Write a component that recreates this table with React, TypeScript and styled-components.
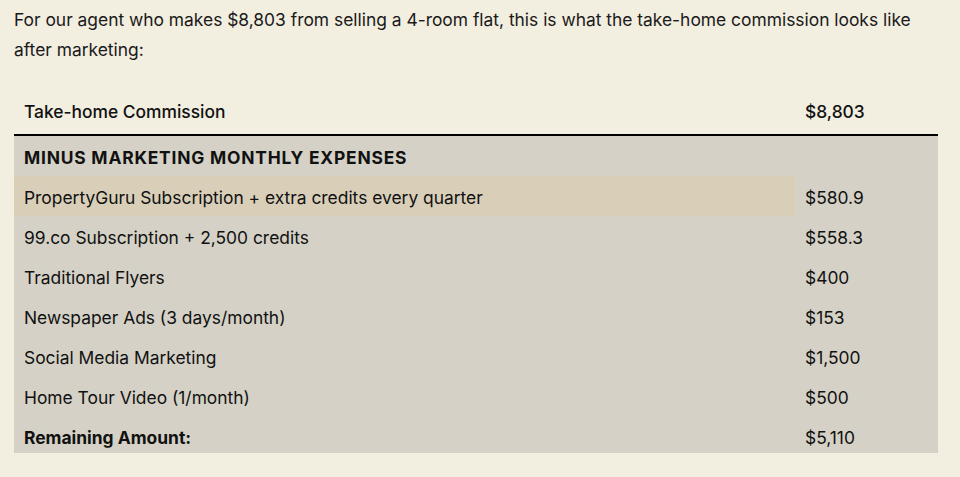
import React from 'react';
import styled, { createGlobalStyle } from 'styled-components';

const GlobalStyle = createGlobalStyle`
  html, body {
    margin: 0;
    padding: 0;
    background: #f2eee0;
  }
  body {
    font-family: Inter, "Noto Sans", sans-serif;
    color: #111;
  }
`;

const Page = styled.div`
  padding: 5px 22px 0 14px;
`;

const Intro = styled.p`
  margin: 0 0 26px;
  font-size: 17.4px;
  line-height: 30px;
  color: #1a1a1a;
`;

const Table = styled.table`
  width: 924px;
  border-collapse: collapse;
  font-size: 17.4px;
  line-height: 20px;
`;

const HeadCell = styled.th`
  text-align: left;
  font-weight: 500;
  padding: 11px 10px 12px;
  border-bottom: 2px solid #000;
`;

const Body = styled.tbody`
  background: #d5d1c6;
`;

const Cell = styled.td<{ $bold?: boolean; $caps?: boolean; $highlight?: boolean; $last?: boolean }>`
  padding: ${(p) => (p.$last ? '12px 10px 5px' : '12px 10px 8px')};
  font-weight: ${(p) => (p.$bold ? 700 : 400)};
  letter-spacing: ${(p) => (p.$caps ? '0.8px' : '0')};
  background: ${(p) => (p.$highlight ? '#d9cfb9' : 'transparent')};
  &:first-child {
    width: 761px;
  }
`;

const rows = [
  { label: 'PropertyGuru Subscription + extra credits every quarter', value: '$580.9', highlight: true },
  { label: '99.co Subscription + 2,500 credits', value: '$558.3' },
  { label: 'Traditional Flyers', value: '$400' },
  { label: 'Newspaper Ads (3 days/month)', value: '$153' },
  { label: 'Social Media Marketing', value: '$1,500' },
  { label: 'Home Tour Video (1/month)', value: '$500' },
];

export default function App() {
  return (
    <Page>
      <GlobalStyle />
      <Intro>
        For our agent who makes $8,803 from selling a 4-room flat, this is what the take-home commission looks like
        after marketing:
      </Intro>
      <Table>
        <thead>
          <tr>
            <HeadCell>Take-home Commission</HeadCell>
            <HeadCell>$8,803</HeadCell>
          </tr>
        </thead>
        <Body>
          <tr>
            <Cell $bold $caps>MINUS MARKETING MONTHLY EXPENSES</Cell>
            <Cell />
          </tr>
          {rows.map((r) => (
            <tr key={r.label}>
              <Cell $highlight={r.highlight}>{r.label}</Cell>
              <Cell>{r.value}</Cell>
            </tr>
          ))}
          <tr>
            <Cell $bold $last>Remaining Amount:</Cell>
            <Cell $last>$5,110</Cell>
          </tr>
        </Body>
      </Table>
    </Page>
  );
}
